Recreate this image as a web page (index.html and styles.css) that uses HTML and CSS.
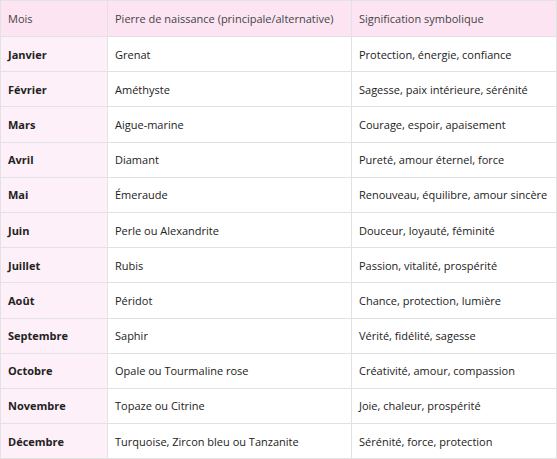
FILE: index.html
```html
<!DOCTYPE html>
<html lang="fr">
<head>
<meta charset="utf-8">
<link rel="stylesheet" href="styles.css">
</head>
<body>
<table class="stones">
  <colgroup>
    <col class="c1"><col class="c2"><col class="c3">
  </colgroup>
  <thead>
    <tr><th>Mois</th><th>Pierre de naissance (principale/alternative)</th><th>Signification symbolique</th></tr>
  </thead>
  <tbody>
    <tr><td>Janvier</td><td>Grenat</td><td>Protection, énergie, confiance</td></tr>
    <tr><td>Février</td><td>Améthyste</td><td>Sagesse, paix intérieure, sérénité</td></tr>
    <tr><td>Mars</td><td>Aigue-marine</td><td>Courage, espoir, apaisement</td></tr>
    <tr><td>Avril</td><td>Diamant</td><td>Pureté, amour éternel, force</td></tr>
    <tr><td>Mai</td><td>Émeraude</td><td>Renouveau, équilibre, amour sincère</td></tr>
    <tr><td>Juin</td><td>Perle ou Alexandrite</td><td>Douceur, loyauté, féminité</td></tr>
    <tr><td>Juillet</td><td>Rubis</td><td>Passion, vitalité, prospérité</td></tr>
    <tr><td>Août</td><td>Péridot</td><td>Chance, protection, lumière</td></tr>
    <tr><td>Septembre</td><td>Saphir</td><td>Vérité, fidélité, sagesse</td></tr>
    <tr><td>Octobre</td><td>Opale ou Tourmaline rose</td><td>Créativité, amour, compassion</td></tr>
    <tr><td>Novembre</td><td>Topaze ou Citrine</td><td>Joie, chaleur, prospérité</td></tr>
    <tr><td>Décembre</td><td>Turquoise, Zircon bleu ou Tanzanite</td><td>Sérénité, force, protection</td></tr>
  </tbody>
</table>
</body>
</html>
```
FILE: styles.css
```css
html, body { margin: 0; padding: 0; background: #fff; }
body { font-family: "Open Sans", "Noto Sans", sans-serif; font-size: 11px; color: #222; }
.stones { border-collapse: collapse; width: 556px; table-layout: fixed; }
.c1 { width: 107px; }
.c2 { width: 244px; }
.c3 { width: 205px; }
.stones th, .stones td {
  border: 1px solid #e2e2e2;
  padding: 0 7px;
  height: 34.2px;
  text-align: left;
  vertical-align: middle;
  line-height: 15px;
  white-space: nowrap;
}
.stones th { background: #fce4f3; font-weight: 400; color: #444; height: 35px; }
.stones td:first-child { background: #fdf0f8; font-weight: 700; }
```
